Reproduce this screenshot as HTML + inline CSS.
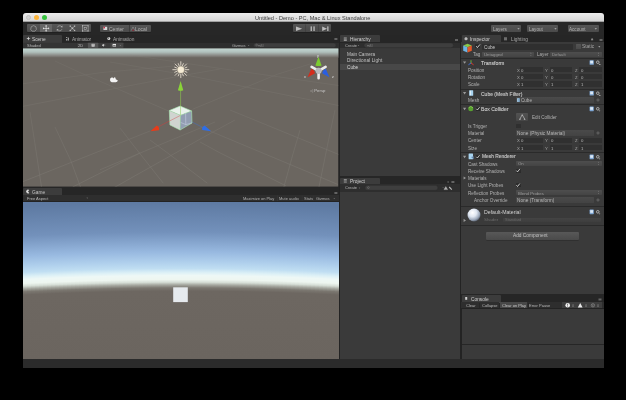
<!DOCTYPE html>
<html><head><meta charset="utf-8">
<style>
*{margin:0;padding:0;box-sizing:border-box}
html,body{width:626px;height:400px;background:#000;overflow:hidden;font-family:"Liberation Sans",sans-serif;color:#c4c4c4}
.a{position:absolute}
.t{position:absolute;white-space:nowrap;font-size:4.6px;line-height:6px;color:#bdbdbd;padding-top:1px;will-change:transform}
.btn{position:absolute;background:linear-gradient(#565656,#4a4a4a);border-radius:1px;box-shadow:0 0.5px 0 #1a1a1a}
.tab{position:absolute;background:#3c3c3c;border-radius:1px 1px 0 0}
.fld{position:absolute;background:#2f2f2f;border-radius:1px}
.dd{position:absolute;background:linear-gradient(#555,#4a4a4a);border-radius:1px}
svg{position:absolute;overflow:visible}
</style></head><body>
<!-- window -->
<div class="a" style="left:23px;top:13px;width:581px;height:355px;background:#232323;border-radius:3px 3px 0 0;overflow:hidden">
  <div class="a" style="left:0;top:0;width:581px;height:9px;background:linear-gradient(#ededed,#d6d6d6);border-bottom:0.5px solid #a0a0a0"></div>
</div>
<!-- traffic lights -->
<div class="a" style="left:25.5px;top:15px;width:5.4px;height:5.4px;border-radius:50%;background:#d2d2d2;border:0.4px solid #c2c2c2"></div>
<div class="a" style="left:33.9px;top:15px;width:5.4px;height:5.4px;border-radius:50%;background:#fbb43a"></div>
<div class="a" style="left:41.9px;top:15px;width:5.4px;height:5.4px;border-radius:50%;background:#36c23e"></div>
<div class="t" style="left:255px;top:14.1px;font-size:5.6px;line-height:6px;color:#3c3c3c">Untitled - Demo - PC, Mac &amp; Linux Standalone</div>

<!-- toolbar -->
<div class="a" style="left:23px;top:22px;width:581px;height:13px;background:#272727"></div>
<div class="btn" style="left:27.1px;top:24.4px;width:63.8px;height:7.8px"></div>
<div class="a" style="left:40.2px;top:24.4px;width:12.3px;height:7.8px;background:#666"></div>
<div class="btn" style="left:99.8px;top:25px;width:51.3px;height:6.8px"></div>
<div class="a" style="left:129px;top:25px;width:0.5px;height:6.8px;background:#3c3c3c"></div>
<div class="btn" style="left:293px;top:24.2px;width:37.9px;height:7.9px;background:linear-gradient(#545454,#484848)"></div>
<div class="dd" style="left:490.8px;top:25.3px;width:30.7px;height:6.6px"></div>
<div class="dd" style="left:527.4px;top:25.3px;width:31.1px;height:6.6px"></div>
<div class="dd" style="left:567.6px;top:25.3px;width:31.2px;height:6.6px"></div>
<!-- toolbar icons -->
<svg class="a" style="left:0;top:0" width="626" height="60" viewBox="0 0 626 60">
<g fill="none" stroke="#bcbcbc" stroke-width="0.55">
<path d="M33.6 25.6 L36 26.8 L36.4 29.4 L34.8 31.2 L32.2 31.2 L30.7 29.4 L31.2 26.8Z"/>
<path d="M61.6 26.6 A2.5 2.5 0 0 0 57.3 27.4 M57.6 30 A2.5 2.5 0 0 0 61.9 29.2"/>
<path d="M70.2 26.1 L74.6 30.5 M74.6 26.1 L70.2 30.5"/>
<rect x="82.5" y="25.8" width="5.6" height="5.2"/>
<rect x="84.1" y="27.4" width="2.4" height="2"/>
</g>
<g fill="#eeeeee">
<rect x="43.6" y="28.05" width="5" height="0.6"/><rect x="45.8" y="25.9" width="0.6" height="4.9"/>
<path d="M46.1 25 L47.2 26.2 H45Z M46.1 31.7 L47.2 30.5 H45Z M42.8 28.35 L44 27.25 V29.45Z M49.4 28.35 L48.2 27.25 V29.45Z"/>
</g>
<g fill="#bcbcbc">
<path d="M62.4 25.6 L62.4 27.6 L60.5 27.1Z M56.8 31 L56.8 29 L58.7 29.5Z"/>
<rect x="71.6" y="27.5" width="1.6" height="1.6"/>
<rect x="69.6" y="25.5" width="1.3" height="1.3"/><rect x="73.9" y="25.5" width="1.3" height="1.3"/><rect x="69.6" y="29.8" width="1.3" height="1.3"/><rect x="73.9" y="29.8" width="1.3" height="1.3"/>
<rect x="82" y="25.3" width="1" height="1"/><rect x="87.6" y="25.3" width="1" height="1"/><rect x="82" y="30.5" width="1" height="1"/><rect x="87.6" y="30.5" width="1" height="1"/>
<path d="M296 26.4 L302.2 28.7 L296 31Z"/>
<rect x="310.6" y="26.4" width="1.3" height="4.6"/><rect x="313.4" y="26.4" width="1.3" height="4.6"/>
<path d="M322.2 26.4 L327 28.7 L322.2 31Z"/><rect x="327.2" y="26.4" width="1.3" height="4.6"/>
</g>
<rect x="103.4" y="26.8" width="3.8" height="3.2" fill="#d8d8d8"/>
<rect x="103.4" y="26.8" width="1.6" height="1.6" fill="#c03048"/>
<path d="M131 30.8 L133 27 L135 30.8" fill="none" stroke="#a0a0a0" stroke-width="0.5"/>
<path d="M132.2 30.8 L133.2 29 L134.2 30.8Z" fill="#a02838"/>
<g fill="#b8b8b8"><path d="M517.3 28.2 h2.4 l-1.2 1.3z M554.3 28.2 h2.4 l-1.2 1.3z M594.6 28.2 h2.4 l-1.2 1.3z"/></g>
<rect x="305.4" y="24.4" width="0.5" height="7.6" fill="#3a3a3a"/>
<rect x="318.4" y="24.4" width="0.5" height="7.6" fill="#3a3a3a"/>
</svg>
<div class="t" style="left:108.8px;top:24.9px;font-size:5px;color:#b4b4b4">Center</div>
<div class="t" style="left:135.3px;top:24.9px;font-size:5px;color:#b4b4b4">Local</div>
<div class="t" style="left:492.5px;top:26.2px;font-size:4.6px;color:#b4b4b4">Layers</div>
<div class="t" style="left:529.2px;top:26.2px;font-size:4.6px;color:#b4b4b4">Layout</div>
<div class="t" style="left:569.4px;top:26.2px;font-size:4.6px;color:#b4b4b4">Account</div>

<!-- scene -->
<div class="a" style="left:23px;top:35px;width:315.8px;height:7.5px;background:#262626"></div>
<div class="tab" style="left:23.2px;top:35px;width:39px;height:7.5px"></div>
<div class="a" style="left:23px;top:42.5px;width:315.8px;height:5.8px;background:#2e2e2e"></div>
<svg class="a" style="left:0;top:0;overflow:hidden;clip-path:inset(48.3px 287.5px 213.2px 23px)" width="626" height="400" viewBox="0 0 626 400">
<defs>
<linearGradient id="gm" gradientUnits="userSpaceOnUse" x1="0" y1="48" x2="0" y2="187"><stop offset="0" stop-color="#fff" stop-opacity="0.25"/><stop offset="0.4" stop-color="#fff" stop-opacity="0.38"/><stop offset="1" stop-color="#fff" stop-opacity="0.55"/></linearGradient><mask id="gmask" maskUnits="userSpaceOnUse" x="0" y="0" width="626" height="400"><rect x="0" y="0" width="626" height="400" fill="url(#gm)"/></mask>
<linearGradient id="ssky" x1="0" y1="0" x2="0" y2="1"><stop offset="0" stop-color="#c4d8d4"/><stop offset="0.4" stop-color="#b0c0bc"/><stop offset="0.75" stop-color="#8a8a86"/><stop offset="1" stop-color="#6b6660"/></linearGradient>
</defs>
<rect x="23" y="48.3" width="315.5" height="138.5" fill="#6b6660"/>
<rect x="23" y="48.3" width="315.8" height="9.5" fill="url(#ssky)"/>
<g stroke="#8a8680" stroke-width="0.6" fill="none" mask="url(#gmask)">
<path d="M22 83.9 L102 72.5 L180 65.5"/>
<path d="M22 106.5 L102 91 L180 76 L220 69"/>
<path d="M22 182 L150 131"/>
<path d="M192.5 109.3 L277.5 74.2 L310 64"/>
<path d="M100 169.75 L180.5 136.2 L215 122"/>
<path d="M113.4 188 L203.5 137.2 L235 120"/>
<path d="M72.7 187 L140 153"/>
<path d="M283.9 187 L292.7 155 L300 130"/>
<path d="M319 187 L330 133 L335 110"/>
<path d="M55 61 L79.8 72.5 L172 112.5"/>
<path d="M210 131 L338 184.5"/>
<path d="M110 62 L182 74.25 L340 105.8"/>
<path d="M130 55 L220 68.4 L340 85.7"/>
<path d="M30 112 L34.7 142.2 L41.5 187"/>
<path d="M55 127 L70.8 160.7 L80.5 187"/>
<path d="M120 128 L134.5 146.75 L163.25 183.2"/>
<path d="M150 140 L167 152.5 L207.3 183.2"/>
<path d="M200 142 L220 152.9 L286 185.9"/>
<path d="M230 110 L248.6 117.6 L340 155"/>
</g>
<!-- camera icon -->
<path d="M110 80.3 Q109.6 78.2 111.6 77.6 Q113 77.3 113.8 78.4 L114.6 77 Q115.6 77.4 115.8 79.3 L117.9 80.6 Q117.3 82.3 115.5 82.2 L111.8 82.2 Q110.3 82 110 80.3Z" fill="#f4f4f4"/>
<!-- sun -->
<path d="M185.20 69.70L188.80 69.70M184.87 71.38L186.90 72.23M183.91 72.81L186.46 75.36M182.48 73.77L183.33 75.80M180.80 74.10L180.80 77.70M179.12 73.77L178.27 75.80M177.69 72.81L175.14 75.36M176.73 71.38L174.70 72.23M176.40 69.70L172.80 69.70M176.73 68.02L174.70 67.17M177.69 66.59L175.14 64.04M179.12 65.63L178.27 63.60M180.80 65.30L180.80 61.70M182.48 65.63L183.33 63.60M183.91 66.59L186.46 64.04M184.87 68.02L186.90 67.17" stroke="#ece4d4" stroke-width="0.85" stroke-linecap="round"/>
<circle cx="180.8" cy="69.7" r="3.4" fill="#f6ecd6" stroke="#c8bca0" stroke-width="0.45"/>
<!-- green y arrow -->
<line x1="180.6" y1="89" x2="180.6" y2="110" stroke="#8cc850" stroke-width="0.6"/>
<path d="M180.6 81 L183.3 90.3 Q180.6 91.3 177.9 90.3Z" fill="#8ad438"/>
<!-- red line & arrow -->
<line x1="180.5" y1="115.3" x2="155" y2="128.5" stroke="#c84040" stroke-width="0.55"/>
<path d="M150.4 131.2 L156.8 125.6 Q159.8 127.4 159 130.2Z" fill="#e63c1a"/>
<!-- blue line & arrow -->
<line x1="184" y1="118" x2="204" y2="128" stroke="#4870b8" stroke-width="0.55"/>
<path d="M211.2 131.2 L204.6 125.4 Q201.4 127.2 202.2 130Z" fill="#2e6ee8"/>
<!-- cube -->
<path d="M180.1 106.1 L191.6 110.9 L180.5 115.3 L169.3 110.5Z" fill="#eaf2ec"/>
<path d="M169.3 110.5 L180.5 115.3 L180.1 130 L169.9 124.9Z" fill="#d0d4d0"/>
<path d="M180.5 115.3 L191.6 110.9 L192 123 L180.1 130Z" fill="#929eb2"/>
<path d="M185.6 112.6 L185.8 124.6 M180.6 122.4 L185.8 124.6 L192 123" fill="none" stroke="#d4dcec" stroke-width="0.45"/>
<path d="M180.1 106.1 L191.6 110.9 L192 123 L180.1 130 L169.9 124.9 L169.3 110.5Z M169.3 110.5 L180.5 115.3 L191.6 110.9 M180.5 115.3 L180.1 130" fill="none" stroke="#a8e8b0" stroke-width="0.6"/>
<line x1="180.6" y1="106" x2="180.5" y2="115.3" stroke="#8cc850" stroke-width="0.5"/>
<line x1="180" y1="115.6" x2="169.6" y2="121" stroke="#d05050" stroke-width="0.45"/>
<!-- orientation gizmo -->
<g>
<path d="M318.6 70.8 L311.6 66.8 M318.6 70.8 L325.6 66.8 M318.6 70.8 L318.6 78.3" stroke="#ececec" stroke-width="2.6" stroke-linecap="round"/>
<path d="M318.5 56.8 L321.6 65.4 Q318.5 66.6 315.4 65.4Z" fill="#7ccc30"/>
<path d="M307.6 77.2 L311.4 68.8 Q315.2 70.6 314.8 73.6Z" fill="#d42c1c"/>
<path d="M329.4 77.2 L325.8 68.8 Q322 70.6 322.4 73.6Z" fill="#2a5ee0"/>
<circle cx="318.6" cy="70.8" r="3.1" fill="#b8b8bc"/>
</g>
</svg>
<div class="t" style="left:317px;top:52.2px;font-size:3.6px;color:#e0e0e0">y</div>
<div class="t" style="left:304px;top:73.3px;font-size:3.6px;color:#e0e0e0">x</div>
<div class="t" style="left:331.6px;top:73.3px;font-size:3.6px;color:#e0e0e0">z</div>
<div class="t" style="left:309.5px;top:87.2px;font-size:4.3px;color:#c8c8c8">&#9665; Persp</div>

<!-- game -->
<div class="a" style="left:23px;top:186.8px;width:315.8px;height:8.4px;background:#262626"></div>
<div class="tab" style="left:23px;top:187.8px;width:39.4px;height:7.4px"></div>
<div class="a" style="left:23px;top:195.2px;width:315.8px;height:6.3px;background:#2e2e2e"></div>
<svg class="a" style="left:23px;top:201.5px;overflow:hidden" width="315.8" height="157.3" viewBox="0 0 315.8 157.3">
<defs><linearGradient id="sky" gradientUnits="userSpaceOnUse" x1="0" y1="0" x2="0" y2="157.3"><stop offset="0.0000" stop-color="#5e7aa2"/><stop offset="0.1907" stop-color="#7391bb"/><stop offset="0.3179" stop-color="#98b9e0"/><stop offset="0.3814" stop-color="#afcfec"/><stop offset="0.4228" stop-color="#c0def2"/><stop offset="0.4482" stop-color="#dcf0f6"/><stop offset="0.4673" stop-color="#eef8f6"/><stop offset="0.4927" stop-color="#eef6f0"/><stop offset="0.5099" stop-color="#d6ded6"/><stop offset="0.5264" stop-color="#a6a8a0"/><stop offset="0.5455" stop-color="#7b7770"/><stop offset="0.5658" stop-color="#6d6761"/><stop offset="1.0000" stop-color="#6b655f"/></linearGradient>
<filter id="bl0"><feGaussianBlur stdDeviation="0.35"/></filter>
</defs>
<g shape-rendering="crispEdges"><rect x="0" y="-10" width="5" height="180" fill="url(#sky)" transform="translate(0 3.90)"/><rect x="4" y="-10" width="5" height="180" fill="url(#sky)" transform="translate(0 3.70)"/><rect x="8" y="-10" width="5" height="180" fill="url(#sky)" transform="translate(0 3.51)"/><rect x="12" y="-10" width="5" height="180" fill="url(#sky)" transform="translate(0 3.32)"/><rect x="16" y="-10" width="5" height="180" fill="url(#sky)" transform="translate(0 3.14)"/><rect x="20" y="-10" width="5" height="180" fill="url(#sky)" transform="translate(0 2.96)"/><rect x="24" y="-10" width="5" height="180" fill="url(#sky)" transform="translate(0 2.79)"/><rect x="28" y="-10" width="5" height="180" fill="url(#sky)" transform="translate(0 2.62)"/><rect x="32" y="-10" width="5" height="180" fill="url(#sky)" transform="translate(0 2.46)"/><rect x="36" y="-10" width="5" height="180" fill="url(#sky)" transform="translate(0 2.31)"/><rect x="40" y="-10" width="5" height="180" fill="url(#sky)" transform="translate(0 2.16)"/><rect x="44" y="-10" width="5" height="180" fill="url(#sky)" transform="translate(0 2.01)"/><rect x="48" y="-10" width="5" height="180" fill="url(#sky)" transform="translate(0 1.87)"/><rect x="52" y="-10" width="5" height="180" fill="url(#sky)" transform="translate(0 1.73)"/><rect x="56" y="-10" width="5" height="180" fill="url(#sky)" transform="translate(0 1.60)"/><rect x="60" y="-10" width="5" height="180" fill="url(#sky)" transform="translate(0 1.48)"/><rect x="64" y="-10" width="5" height="180" fill="url(#sky)" transform="translate(0 1.35)"/><rect x="68" y="-10" width="5" height="180" fill="url(#sky)" transform="translate(0 1.24)"/><rect x="72" y="-10" width="5" height="180" fill="url(#sky)" transform="translate(0 1.13)"/><rect x="76" y="-10" width="5" height="180" fill="url(#sky)" transform="translate(0 1.02)"/><rect x="80" y="-10" width="5" height="180" fill="url(#sky)" transform="translate(0 0.92)"/><rect x="84" y="-10" width="5" height="180" fill="url(#sky)" transform="translate(0 0.83)"/><rect x="88" y="-10" width="5" height="180" fill="url(#sky)" transform="translate(0 0.74)"/><rect x="92" y="-10" width="5" height="180" fill="url(#sky)" transform="translate(0 0.66)"/><rect x="96" y="-10" width="5" height="180" fill="url(#sky)" transform="translate(0 0.58)"/><rect x="100" y="-10" width="5" height="180" fill="url(#sky)" transform="translate(0 0.50)"/><rect x="104" y="-10" width="5" height="180" fill="url(#sky)" transform="translate(0 0.43)"/><rect x="108" y="-10" width="5" height="180" fill="url(#sky)" transform="translate(0 0.37)"/><rect x="112" y="-10" width="5" height="180" fill="url(#sky)" transform="translate(0 0.31)"/><rect x="116" y="-10" width="5" height="180" fill="url(#sky)" transform="translate(0 0.26)"/><rect x="120" y="-10" width="5" height="180" fill="url(#sky)" transform="translate(0 0.21)"/><rect x="124" y="-10" width="5" height="180" fill="url(#sky)" transform="translate(0 0.16)"/><rect x="128" y="-10" width="5" height="180" fill="url(#sky)" transform="translate(0 0.12)"/><rect x="132" y="-10" width="5" height="180" fill="url(#sky)" transform="translate(0 0.09)"/><rect x="136" y="-10" width="5" height="180" fill="url(#sky)" transform="translate(0 0.06)"/><rect x="140" y="-10" width="5" height="180" fill="url(#sky)" transform="translate(0 0.04)"/><rect x="144" y="-10" width="5" height="180" fill="url(#sky)" transform="translate(0 0.02)"/><rect x="148" y="-10" width="5" height="180" fill="url(#sky)" transform="translate(0 0.01)"/><rect x="152" y="-10" width="5" height="180" fill="url(#sky)" transform="translate(0 0.00)"/><rect x="156" y="-10" width="5" height="180" fill="url(#sky)" transform="translate(0 0.00)"/><rect x="160" y="-10" width="5" height="180" fill="url(#sky)" transform="translate(0 0.00)"/><rect x="164" y="-10" width="5" height="180" fill="url(#sky)" transform="translate(0 0.01)"/><rect x="168" y="-10" width="5" height="180" fill="url(#sky)" transform="translate(0 0.02)"/><rect x="172" y="-10" width="5" height="180" fill="url(#sky)" transform="translate(0 0.04)"/><rect x="176" y="-10" width="5" height="180" fill="url(#sky)" transform="translate(0 0.06)"/><rect x="180" y="-10" width="5" height="180" fill="url(#sky)" transform="translate(0 0.09)"/><rect x="184" y="-10" width="5" height="180" fill="url(#sky)" transform="translate(0 0.13)"/><rect x="188" y="-10" width="5" height="180" fill="url(#sky)" transform="translate(0 0.17)"/><rect x="192" y="-10" width="5" height="180" fill="url(#sky)" transform="translate(0 0.21)"/><rect x="196" y="-10" width="5" height="180" fill="url(#sky)" transform="translate(0 0.26)"/><rect x="200" y="-10" width="5" height="180" fill="url(#sky)" transform="translate(0 0.31)"/><rect x="204" y="-10" width="5" height="180" fill="url(#sky)" transform="translate(0 0.37)"/><rect x="208" y="-10" width="5" height="180" fill="url(#sky)" transform="translate(0 0.44)"/><rect x="212" y="-10" width="5" height="180" fill="url(#sky)" transform="translate(0 0.50)"/><rect x="216" y="-10" width="5" height="180" fill="url(#sky)" transform="translate(0 0.58)"/><rect x="220" y="-10" width="5" height="180" fill="url(#sky)" transform="translate(0 0.66)"/><rect x="224" y="-10" width="5" height="180" fill="url(#sky)" transform="translate(0 0.74)"/><rect x="228" y="-10" width="5" height="180" fill="url(#sky)" transform="translate(0 0.83)"/><rect x="232" y="-10" width="5" height="180" fill="url(#sky)" transform="translate(0 0.93)"/><rect x="236" y="-10" width="5" height="180" fill="url(#sky)" transform="translate(0 1.03)"/><rect x="240" y="-10" width="5" height="180" fill="url(#sky)" transform="translate(0 1.13)"/><rect x="244" y="-10" width="5" height="180" fill="url(#sky)" transform="translate(0 1.25)"/><rect x="248" y="-10" width="5" height="180" fill="url(#sky)" transform="translate(0 1.36)"/><rect x="252" y="-10" width="5" height="180" fill="url(#sky)" transform="translate(0 1.48)"/><rect x="256" y="-10" width="5" height="180" fill="url(#sky)" transform="translate(0 1.61)"/><rect x="260" y="-10" width="5" height="180" fill="url(#sky)" transform="translate(0 1.74)"/><rect x="264" y="-10" width="5" height="180" fill="url(#sky)" transform="translate(0 1.87)"/><rect x="268" y="-10" width="5" height="180" fill="url(#sky)" transform="translate(0 2.02)"/><rect x="272" y="-10" width="5" height="180" fill="url(#sky)" transform="translate(0 2.16)"/><rect x="276" y="-10" width="5" height="180" fill="url(#sky)" transform="translate(0 2.31)"/><rect x="280" y="-10" width="5" height="180" fill="url(#sky)" transform="translate(0 2.47)"/><rect x="284" y="-10" width="5" height="180" fill="url(#sky)" transform="translate(0 2.63)"/><rect x="288" y="-10" width="5" height="180" fill="url(#sky)" transform="translate(0 2.80)"/><rect x="292" y="-10" width="5" height="180" fill="url(#sky)" transform="translate(0 2.97)"/><rect x="296" y="-10" width="5" height="180" fill="url(#sky)" transform="translate(0 3.15)"/><rect x="300" y="-10" width="5" height="180" fill="url(#sky)" transform="translate(0 3.33)"/><rect x="304" y="-10" width="5" height="180" fill="url(#sky)" transform="translate(0 3.52)"/><rect x="308" y="-10" width="5" height="180" fill="url(#sky)" transform="translate(0 3.71)"/><rect x="312" y="-10" width="5" height="180" fill="url(#sky)" transform="translate(0 3.91)"/></g>
<rect x="150.2" y="85.3" width="14.6" height="14.8" fill="#e6eaee" filter="url(#bl0)"/>
</svg>

<!-- hierarchy -->
<div class="a" style="left:339.5px;top:35px;width:120.5px;height:7.5px;background:#262626"></div>
<div class="tab" style="left:340.2px;top:35.2px;width:39.4px;height:7.3px"></div>
<div class="a" style="left:339.5px;top:42.5px;width:120.5px;height:5.5px;background:#2e2e2e"></div>
<div class="a" style="left:339.5px;top:48px;width:120.5px;height:127.8px;background:#3a3a3a"></div>
<div class="a" style="left:339.5px;top:64.2px;width:120.5px;height:5.6px;background:#484848"></div>
<div class="t" style="left:346.8px;top:63.5px;font-size:4.7px;color:#d8d8d8">Cube</div>

<!-- project -->
<div class="a" style="left:339.5px;top:175.8px;width:120.5px;height:8.5px;background:#262626"></div>
<div class="tab" style="left:340px;top:177.5px;width:39.7px;height:6.8px"></div>
<div class="a" style="left:339.5px;top:184.3px;width:120.5px;height:7.3px;background:#2e2e2e"></div>
<div class="a" style="left:340.4px;top:191.6px;width:119.6px;height:167px;background:#3a3a3a"></div>

<!-- inspector -->
<div class="a" style="left:461px;top:35px;width:143px;height:7.4px;background:#262626"></div>
<div class="tab" style="left:461.9px;top:35.4px;width:38.9px;height:7px"></div>
<div class="a" style="left:461px;top:42.4px;width:143px;height:251.3px;background:#3a3a3a"></div>

<!-- inspector content -->
<div class="a" style="left:516.1px;top:168.6px;width:4.5px;height:4.2px;background:#2c2c2c;border-radius:0.5px"></div>
<div class="a" style="left:516.1px;top:183.1px;width:4.5px;height:4.2px;background:#2c2c2c;border-radius:0.5px"></div>
<div class="a" style="left:461px;top:57.6px;width:143.0px;height:0.7px;background:#2a2a2a;"></div>
<div class="a" style="left:461px;top:88.8px;width:143.0px;height:0.7px;background:#2a2a2a;"></div>
<div class="a" style="left:461px;top:103.9px;width:143.0px;height:0.7px;background:#2a2a2a;"></div>
<div class="a" style="left:461px;top:152px;width:143.0px;height:0.7px;background:#2a2a2a;"></div>
<div class="a" style="left:461px;top:205.9px;width:143.0px;height:0.7px;background:#2a2a2a;"></div>
<div class="a" style="left:461px;top:224.8px;width:143.0px;height:0.7px;background:#2a2a2a;"></div>
<div class="a" style="left:482.4px;top:43.8px;width:90.4px;height:5.8px;background:#2f2f2f;border-radius:0.8px"></div>
<div class="t" style="left:483.8px;top:43.7px;font-size:4.7px;color:#c8c8c8;">Cube</div>
<div class="a" style="left:475.3px;top:44px;width:5.0px;height:4.4px;background:#2a2a2a;border-radius:0.6px"></div>
<div class="a" style="left:576.4px;top:44.2px;width:4.8px;height:4.4px;background:linear-gradient(#555,#4a4a4a);border-radius:0.5px"></div>
<div class="t" style="left:582px;top:43.2px;font-size:4.9px;color:#a4a4a4;">Static</div>
<div class="t" style="left:473.4px;top:51.4px;font-size:4.6px;color:#b0b0b0;">Tag</div>
<div class="a" style="left:482.4px;top:51.8px;width:51.7px;height:5.1px;background:linear-gradient(#4e4e4e,#444);border-radius:0.8px"></div>
<div class="t" style="left:484.3px;top:51.3px;font-size:4.3px;color:#9c9c9c;">Untagged</div>
<div class="t" style="left:537px;top:51.4px;font-size:4.6px;color:#b0b0b0;">Layer</div>
<div class="a" style="left:550.2px;top:51.8px;width:51.4px;height:5.1px;background:linear-gradient(#4e4e4e,#444);border-radius:0.8px"></div>
<div class="t" style="left:551.8px;top:51.3px;font-size:4.3px;color:#9c9c9c;">Default</div>
<div class="t" style="left:481.1px;top:58.9px;font-size:5.2px;color:#d0d0d0;-webkit-text-stroke:0.12px #c8c8c8">Transform</div>
<div class="t" style="left:467.9px;top:66.5px;font-size:4.6px;color:#b0b0b0;">Position</div>
<div class="t" style="left:516.8px;top:66.5px;font-size:4.2px;color:#a8a8a8;">X</div>
<div class="a" style="left:520px;top:66.8px;width:22.9px;height:5.4px;background:#303030;border-radius:0.6px"></div>
<div class="t" style="left:521.3px;top:66.5px;font-size:4.3px;color:#b8b8b8;">0</div>
<div class="t" style="left:545.3px;top:66.5px;font-size:4.2px;color:#a8a8a8;">Y</div>
<div class="a" style="left:549.8px;top:66.8px;width:22.4px;height:5.4px;background:#303030;border-radius:0.6px"></div>
<div class="t" style="left:551.0999999999999px;top:66.5px;font-size:4.3px;color:#b8b8b8;">0</div>
<div class="t" style="left:574.7px;top:66.5px;font-size:4.2px;color:#a8a8a8;">Z</div>
<div class="a" style="left:579.2px;top:66.8px;width:22.4px;height:5.4px;background:#303030;border-radius:0.6px"></div>
<div class="t" style="left:580.5px;top:66.5px;font-size:4.3px;color:#b8b8b8;">0</div>
<div class="t" style="left:467.9px;top:73.6px;font-size:4.6px;color:#b0b0b0;">Rotation</div>
<div class="t" style="left:516.8px;top:73.6px;font-size:4.2px;color:#a8a8a8;">X</div>
<div class="a" style="left:520px;top:73.89999999999999px;width:22.9px;height:5.4px;background:#303030;border-radius:0.6px"></div>
<div class="t" style="left:521.3px;top:73.6px;font-size:4.3px;color:#b8b8b8;">0</div>
<div class="t" style="left:545.3px;top:73.6px;font-size:4.2px;color:#a8a8a8;">Y</div>
<div class="a" style="left:549.8px;top:73.89999999999999px;width:22.4px;height:5.4px;background:#303030;border-radius:0.6px"></div>
<div class="t" style="left:551.0999999999999px;top:73.6px;font-size:4.3px;color:#b8b8b8;">0</div>
<div class="t" style="left:574.7px;top:73.6px;font-size:4.2px;color:#a8a8a8;">Z</div>
<div class="a" style="left:579.2px;top:73.89999999999999px;width:22.4px;height:5.4px;background:#303030;border-radius:0.6px"></div>
<div class="t" style="left:580.5px;top:73.6px;font-size:4.3px;color:#b8b8b8;">0</div>
<div class="t" style="left:467.9px;top:81.0px;font-size:4.6px;color:#b0b0b0;">Scale</div>
<div class="t" style="left:516.8px;top:81.0px;font-size:4.2px;color:#a8a8a8;">X</div>
<div class="a" style="left:520px;top:81.3px;width:22.9px;height:5.4px;background:#303030;border-radius:0.6px"></div>
<div class="t" style="left:521.3px;top:81.0px;font-size:4.3px;color:#b8b8b8;">1</div>
<div class="t" style="left:545.3px;top:81.0px;font-size:4.2px;color:#a8a8a8;">Y</div>
<div class="a" style="left:549.8px;top:81.3px;width:22.4px;height:5.4px;background:#303030;border-radius:0.6px"></div>
<div class="t" style="left:551.0999999999999px;top:81.0px;font-size:4.3px;color:#b8b8b8;">1</div>
<div class="t" style="left:574.7px;top:81.0px;font-size:4.2px;color:#a8a8a8;">Z</div>
<div class="a" style="left:579.2px;top:81.3px;width:22.4px;height:5.4px;background:#303030;border-radius:0.6px"></div>
<div class="t" style="left:580.5px;top:81.0px;font-size:4.3px;color:#b8b8b8;">1</div>
<div class="t" style="left:481.4px;top:89.6px;font-size:5px;color:#c8c8c8;-webkit-text-stroke:0.12px #c8c8c8">Cube (Mesh Filter)</div>
<div class="t" style="left:467.9px;top:96.9px;font-size:4.6px;color:#b0b0b0;">Mesh</div>
<div class="a" style="left:516.1px;top:97.3px;width:78.0px;height:5.3px;background:linear-gradient(#4a4a4a,#434343);border-radius:0.6px"></div>
<div class="a" style="left:517px;top:97.8px;width:3.4px;height:4.2px;background:linear-gradient(90deg,#a8c8e0,#6890b0);border-radius:0.4px"></div>
<div class="t" style="left:521.2px;top:96.9px;font-size:4.6px;color:#b8b8b8;">Cube</div>
<div class="t" style="left:481.4px;top:105.2px;font-size:5.1px;color:#c8c8c8;-webkit-text-stroke:0.12px #c8c8c8">Box Collider</div>
<div class="a" style="left:475.6px;top:106.7px;width:4.3px;height:4.2px;background:#2a2a2a;border-radius:0.5px"></div>
<div class="a" style="left:516.1px;top:112.8px;width:12.4px;height:8.2px;background:linear-gradient(#525252,#464646);border-radius:0.8px"></div>
<div class="t" style="left:531.7px;top:114.2px;font-size:4.6px;color:#b0b0b0;">Edit Collider</div>
<div class="t" style="left:467.9px;top:122.6px;font-size:4.6px;color:#b0b0b0;">Is Trigger</div>
<div class="a" style="left:516.1px;top:123.6px;width:4.5px;height:4.0px;background:#2f2f2f;border-radius:0.5px"></div>
<div class="t" style="left:467.9px;top:129.9px;font-size:4.6px;color:#b0b0b0;">Material</div>
<div class="a" style="left:516.1px;top:130.4px;width:78.0px;height:5.3px;background:linear-gradient(#4a4a4a,#434343);border-radius:0.6px"></div>
<div class="t" style="left:516.8px;top:129.9px;font-size:4.75px;color:#b8b8b8;">None (Physic Material)</div>
<div class="t" style="left:467.9px;top:137.4px;font-size:4.6px;color:#b0b0b0;">Center</div>
<div class="t" style="left:516.8px;top:137.4px;font-size:4.2px;color:#a8a8a8;">X</div>
<div class="a" style="left:520px;top:137.70000000000002px;width:22.9px;height:5.4px;background:#303030;border-radius:0.6px"></div>
<div class="t" style="left:521.3px;top:137.4px;font-size:4.3px;color:#b8b8b8;">0</div>
<div class="t" style="left:545.3px;top:137.4px;font-size:4.2px;color:#a8a8a8;">Y</div>
<div class="a" style="left:549.8px;top:137.70000000000002px;width:22.4px;height:5.4px;background:#303030;border-radius:0.6px"></div>
<div class="t" style="left:551.0999999999999px;top:137.4px;font-size:4.3px;color:#b8b8b8;">0</div>
<div class="t" style="left:574.7px;top:137.4px;font-size:4.2px;color:#a8a8a8;">Z</div>
<div class="a" style="left:579.2px;top:137.70000000000002px;width:22.4px;height:5.4px;background:#303030;border-radius:0.6px"></div>
<div class="t" style="left:580.5px;top:137.4px;font-size:4.3px;color:#b8b8b8;">0</div>
<div class="t" style="left:467.9px;top:144.5px;font-size:4.6px;color:#b0b0b0;">Size</div>
<div class="t" style="left:516.8px;top:144.5px;font-size:4.2px;color:#a8a8a8;">X</div>
<div class="a" style="left:520px;top:144.8px;width:22.9px;height:5.4px;background:#303030;border-radius:0.6px"></div>
<div class="t" style="left:521.3px;top:144.5px;font-size:4.3px;color:#b8b8b8;">1</div>
<div class="t" style="left:545.3px;top:144.5px;font-size:4.2px;color:#a8a8a8;">Y</div>
<div class="a" style="left:549.8px;top:144.8px;width:22.4px;height:5.4px;background:#303030;border-radius:0.6px"></div>
<div class="t" style="left:551.0999999999999px;top:144.5px;font-size:4.3px;color:#b8b8b8;">1</div>
<div class="t" style="left:574.7px;top:144.5px;font-size:4.2px;color:#a8a8a8;">Z</div>
<div class="a" style="left:579.2px;top:144.8px;width:22.4px;height:5.4px;background:#303030;border-radius:0.6px"></div>
<div class="t" style="left:580.5px;top:144.5px;font-size:4.3px;color:#b8b8b8;">1</div>
<div class="t" style="left:481.6px;top:153.2px;font-size:4.9px;color:#c8c8c8;-webkit-text-stroke:0.12px #c8c8c8">Mesh Renderer</div>
<div class="a" style="left:475.6px;top:154.6px;width:4.3px;height:4.2px;background:#2a2a2a;border-radius:0.5px"></div>
<div class="t" style="left:468px;top:160.5px;font-size:4.6px;color:#b0b0b0;">Cast Shadows</div>
<div class="a" style="left:515.6px;top:161px;width:86.0px;height:5.0px;background:linear-gradient(#4e4e4e,#444);border-radius:0.8px"></div>
<div class="t" style="left:517.6px;top:160.4px;font-size:4.3px;color:#9c9c9c;">On</div>
<div class="t" style="left:468px;top:167.7px;font-size:4.6px;color:#b0b0b0;">Receive Shadows</div>
<div class="t" style="left:467.6px;top:175.0px;font-size:4.6px;color:#b0b0b0;">Materials</div>
<div class="t" style="left:468px;top:182.2px;font-size:4.6px;color:#b0b0b0;">Use Light Probes</div>
<div class="t" style="left:468px;top:189.6px;font-size:4.6px;color:#b0b0b0;">Reflection Probes</div>
<div class="a" style="left:515.6px;top:190px;width:86.0px;height:5.0px;background:linear-gradient(#4e4e4e,#444);border-radius:0.8px"></div>
<div class="t" style="left:517.6px;top:189.5px;font-size:4.3px;color:#9c9c9c;">Blend Probes</div>
<div class="t" style="left:474px;top:197.0px;font-size:4.6px;color:#b0b0b0;">Anchor Override</div>
<div class="a" style="left:515.6px;top:197.4px;width:78.5px;height:5.2px;background:linear-gradient(#4a4a4a,#434343);border-radius:0.6px"></div>
<div class="t" style="left:516.6px;top:197.0px;font-size:4.75px;color:#b8b8b8;">None (Transform)</div>
<div class="t" style="left:484px;top:208.1px;font-size:5.2px;color:#d0d0d0">Default-Material</div>
<div class="t" style="left:484px;top:215.8px;font-size:4.4px;color:#6c6c6c;">Shader</div>
<div class="a" style="left:503px;top:217.6px;width:98.0px;height:4.2px;background:linear-gradient(#444,#3e3e3e);border-radius:0.8px"></div>
<div class="t" style="left:505px;top:215.8px;font-size:4px;color:#6a6a6a;">Standard</div>
<div class="a" style="left:486px;top:231.7px;width:92.8px;height:7.9px;background:linear-gradient(#585858,#4a4a4a);border-radius:1px;box-shadow:0 0.5px 0 #262626"></div>
<div class="t" style="left:512.8px;top:232.1px;font-size:4.8px;color:#c0c0c0;">Add Component</div>
<svg class="a" style="left:0;top:0" width="626" height="400" viewBox="0 0 626 400">
<!-- cube icon -->
<path d="M467.5 43.8 L471.8 45.6 L467.5 47.3 L463.2 45.6Z" fill="#88c848"/>
<path d="M463.2 45.6 L467.5 47.3 L467.5 52.5 L463.2 50.7Z" fill="#6cb4e4"/>
<path d="M467.5 47.3 L471.8 45.6 L471.8 50.7 L467.5 52.5Z" fill="#e45828"/>
<path d="M476.2 46.2 l1.2 1.4 l2.6-3.2" stroke="#f0f0f0" stroke-width="0.8" fill="none"/>

<path d="M598.3 46.3 h2 l-1 1.1z" fill="#c0c0c0"/>
<g fill="#909090"><path d="M530.3 53.4 l0.6-0.8 0.6 0.8z M530.3 55 l0.6 0.8 0.6-0.8z M597.8 53.4 l0.6-0.8 0.6 0.8z M597.8 55 l0.6 0.8 0.6-0.8z M597.8 162.6 l0.6-0.8 0.6 0.8z M597.8 164.2 l0.6 0.8 0.6-0.8z M597.8 191.6 l0.6-0.8 0.6 0.8z M597.8 193.2 l0.6 0.8 0.6-0.8z"/></g>
<!-- fold arrows -->
<g fill="#9a9a9a">
<path d="M463 61.4 h3.2 l-1.6 2.4z M463 92.1 h3.2 l-1.6 2.4z M463 107.8 h3.2 l-1.6 2.4z M463 155.8 h3.2 l-1.6 2.4z"/>
<path d="M463.6 176.4 v3.2 l2.4-1.6z M463.6 218.8 v3.2 l2.4-1.6z"/>
</g>
<!-- transform icon -->
<path d="M471 60.2 v2.8" stroke="#70c040" stroke-width="0.9"/>
<path d="M471 63 l-2.6 1.8" stroke="#3c70d8" stroke-width="1"/>
<path d="M471 63 l2.6 1.8" stroke="#d83c30" stroke-width="1"/>
<!-- right icons (book + gear) -->
<g>
<rect x="589.6" y="60.2" width="4.2" height="4.6" rx="0.6" fill="#7ea6d4"/><rect x="590.2" y="60.8" width="2.8" height="2.6" fill="#dbe8f4"/>
<rect x="589.6" y="91" width="4.2" height="4.6" rx="0.6" fill="#7ea6d4"/><rect x="590.2" y="91.6" width="2.8" height="2.6" fill="#dbe8f4"/>
<rect x="589.6" y="106.6" width="4.2" height="4.6" rx="0.6" fill="#7ea6d4"/><rect x="590.2" y="107.2" width="2.8" height="2.6" fill="#dbe8f4"/>
<rect x="589.6" y="154.6" width="4.2" height="4.6" rx="0.6" fill="#7ea6d4"/><rect x="590.2" y="155.2" width="2.8" height="2.6" fill="#dbe8f4"/>
<rect x="589.6" y="209.6" width="4.2" height="4.6" rx="0.6" fill="#7ea6d4"/><rect x="590.2" y="210.2" width="2.8" height="2.6" fill="#dbe8f4"/>
</g>
<g fill="none" stroke="#b8b8b8" stroke-width="0.9">
<circle cx="597.8" cy="62.2" r="1.3"/><circle cx="597.8" cy="93.2" r="1.3"/><circle cx="597.8" cy="108.8" r="1.3"/><circle cx="597.8" cy="156.8" r="1.3"/><circle cx="597.8" cy="211.8" r="1.3"/>
</g>
<g fill="#b8b8b8"><path d="M599.2 63.6 l1.4 1.4 M599.2 94.6 l1.4 1.4" stroke="#b8b8b8" stroke-width="0.6"/>
<path d="M598.6 64 h1.8 l-0.9 1z M598.6 95 h1.8 l-0.9 1z M598.6 110.6 h1.8 l-0.9 1z M598.6 158.6 h1.8 l-0.9 1z M598.6 213.6 h1.8 l-0.9 1z"/></g>
<!-- object pickers -->
<g fill="none" stroke="#8a8a8a" stroke-width="0.5"><circle cx="598" cy="100" r="1.1"/><circle cx="598" cy="133" r="1.1"/><circle cx="598" cy="200" r="1.1"/></g>
<!-- mesh filter icon -->
<rect x="469.2" y="90.2" width="4" height="5.6" rx="0.5" fill="#a8d4f0"/><rect x="469.8" y="90.8" width="1.2" height="4.4" fill="#e0f0fa"/>
<!-- box collider icon -->
<circle cx="470.8" cy="108.7" r="2.5" fill="#58a030"/><path d="M468.6 107.8 L470.8 106.4 L473 107.8" stroke="#9ad860" stroke-width="0.7" fill="none"/>
<path d="M476.4 108.8 l1 1.2 l2.2-2.8" stroke="#f0f0f0" stroke-width="0.75" fill="none"/>
<!-- edit collider icon -->
<path d="M519.8 119.2 L522.2 114.8 L524.8 119.2 M519.8 119.2 l1-0.2 M524.8 119.2 h-1" stroke="#d0d0d0" stroke-width="0.6" fill="none"/>
<circle cx="522.2" cy="115" r="0.5" fill="#d0d0d0"/><circle cx="519.8" cy="119.2" r="0.5" fill="#d0d0d0"/><circle cx="524.8" cy="119.2" r="0.5" fill="#d0d0d0"/>
<!-- mesh renderer icon -->
<rect x="468.6" y="153.4" width="4.4" height="5.8" rx="0.5" fill="#a8d4f0"/><path d="M471 157 l2.6 2.2 v-3z" fill="#6a8ab0"/>
<path d="M476.4 156.8 l1 1.2 l2.2-2.8" stroke="#f0f0f0" stroke-width="0.75" fill="none"/>
<!-- checks -->
<g stroke="#e8e8e8" stroke-width="0.8" fill="none">
<path d="M516.4 170.6 l1.1 1.3 l2.4-3"/>
<path d="M516.4 185.2 l1.1 1.3 l2.4-3"/>
</g>
<!-- sphere -->
<defs><radialGradient id="sph" cx="0.38" cy="0.32" r="0.7"><stop offset="0" stop-color="#ffffff"/><stop offset="0.45" stop-color="#dfe6f0"/><stop offset="0.8" stop-color="#9aa6b8"/><stop offset="1" stop-color="#5a6270"/></radialGradient></defs>
<circle cx="474" cy="215" r="6.5" fill="url(#sph)"/>
</svg>
<!-- console -->
<div class="a" style="left:461px;top:293.7px;width:143px;height:8.6px;background:#262626"></div>
<div class="tab" style="left:462.4px;top:295.4px;width:38.4px;height:6.9px"></div>
<div class="a" style="left:461px;top:302.3px;width:143px;height:6.2px;background:#2e2e2e"></div>
<div class="a" style="left:462px;top:308.5px;width:142px;height:50.1px;background:#3a3a3a"></div>

<!-- panel chrome text -->
<svg class="a" style="left:0;top:0" width="626" height="400" viewBox="0 0 626 400">
<!-- scene tab icon -->
<path d="M28.4 36.4 L29 38 L30.6 38.5 L29 39 L28.4 40.6 L27.8 39 L26.2 38.5 L27.8 38Z" fill="#d0d0d0"/>
<g fill="#b8b8b8"><rect x="66.2" y="37" width="1" height="1"/><rect x="66.2" y="39" width="1" height="1.6"/><rect x="67.8" y="37.6" width="1" height="3"/></g>
<circle cx="108.8" cy="38.5" r="1.5" fill="#d8d8d8"/><circle cx="108.4" cy="38.1" r="0.6" fill="#333"/>
<!-- scene toolbar -->
<path d="M70.8 44.8 h1.6 l-0.8 0.9z" fill="#b0b0b0"/>
<rect x="76.8" y="42.8" width="47" height="5" fill="#3a3a3a" rx="0.5"/><rect x="87.9" y="42.8" width="10.4" height="5" fill="#555" rx="0.5"/><rect x="23" y="42.8" width="53.5" height="5" fill="#343434"/>
<rect x="91.6" y="43.8" width="3" height="2.8" fill="#e0e0e0"/><path d="M92.1 44.2h2M92.1 45.2h2" stroke="#555" stroke-width="0.4"/>
<path d="M102.2 44.5h0.8l1-0.8v3l-1-0.8h-0.8z" fill="#c8c8c8"/><path d="M104.6 44.2q0.6 0.9 0 1.8" stroke="#c8c8c8" stroke-width="0.35" fill="none"/>
<rect x="110.4" y="42.8" width="12.7" height="5" fill="#474747" rx="0.5"/>
<rect x="112.6" y="43.9" width="3.4" height="2.6" fill="#e8e8e8"/><path d="M113 46.1l1-1 0.8 0.7 0.8-0.5v0.8h-2.6z" fill="#222"/>
<path d="M119.6 44.9 h1.4 l-0.7 0.8z" fill="#a0a0a0"/>
<rect x="253.5" y="43" width="82.5" height="4.4" rx="2.2" fill="#3e3e3e" stroke="#2a2a2a" stroke-width="0.4"/>
<circle cx="256.6" cy="45" r="0.9" fill="none" stroke="#909090" stroke-width="0.35"/>
<path d="M248 44.9 h1.4 l-0.7 0.8z" fill="#a0a0a0"/>
<!-- menu icons -->
<g fill="#a0a0a0">
<path d="M334.4 38.6h3v0.5h-3zM334.4 39.5h3v0.5h-3z"/>
<path d="M455 39h3v0.5h-3zM455 39.9h3v0.5h-3z"/>
<path d="M599.5 39h3v0.5h-3zM599.5 39.9h3v0.5h-3z"/>
<path d="M451.4 181.2h3v0.5h-3zM451.4 182.1h3v0.5h-3z"/>
<path d="M334.4 192.2h3v0.5h-3zM334.4 193.1h3v0.5h-3z"/>
<path d="M598.5 298.8h3v0.5h-3zM598.5 299.7h3v0.5h-3z"/>
</g>
<!-- game tab icon -->
<path d="M29.3 190.1 A1.9 1.9 0 1 0 29.3 192.9 L28 191.5Z" fill="#d8d8d8"/>
<path d="M86.5 197.8 h1.4 l-0.7 0.8z" fill="#a0a0a0"/>
<path d="M333.5 198 h1.4 l-0.7 0.8z" fill="#a0a0a0"/>
<g fill="#3a3a3a"><rect x="277" y="195.5" width="0.5" height="5.6"/><rect x="301.8" y="195.5" width="0.5" height="5.6"/><rect x="312.8" y="195.5" width="0.5" height="5.6"/></g>
<!-- hierarchy tab icon -->
<g fill="#c0c0c0"><rect x="343.8" y="37.6" width="3" height="0.7"/><rect x="343.8" y="38.8" width="3" height="0.7"/><rect x="343.8" y="40" width="3" height="0.7"/></g>
<path d="M357.8 44.9 h1.4 l-0.7 0.8z" fill="#a0a0a0"/>
<rect x="364" y="42.9" width="89.4" height="4.8" rx="2.4" fill="#3e3e3e" stroke="#2a2a2a" stroke-width="0.4"/>
<!-- project -->
<g fill="#c0c0c0"><rect x="343.8" y="179.4" width="3" height="0.6"/><rect x="343.8" y="180.6" width="3" height="0.6"/><rect x="343.8" y="181.8" width="3" height="0.6"/></g>
<path d="M358.8 187.7 h1.4 l-0.7 0.8z" fill="#a0a0a0"/>
<rect x="365" y="185.3" width="72.8" height="5" rx="2.5" fill="#3e3e3e" stroke="#2a2a2a" stroke-width="0.4"/>
<circle cx="368.4" cy="187.6" r="0.9" fill="none" stroke="#909090" stroke-width="0.35"/>
<path d="M444 189.6 l1.8-3 1.8 3z M442.8 187.2 l1 1" fill="#b0b0b0" stroke="#b0b0b0" stroke-width="0.4"/>
<path d="M449.6 186.6 l2.6 2.6 l-0.8 0.8 l-2.6-2.6z" fill="#b8b8b8"/>
<path d="M447.6 181.6 h1 v1 h-1z" fill="#a0a0a0"/>
<!-- inspector tab icons -->
<circle cx="466" cy="38.8" r="1.5" fill="#d8d8d8"/><rect x="465.7" y="38.4" width="0.6" height="1.3" fill="#333"/>
<g fill="#b0b0b0"><rect x="504" y="37.6" width="3" height="0.6"/><rect x="504" y="38.6" width="3" height="0.6"/><rect x="504" y="39.6" width="3" height="0.6"/></g>
<path d="M591.6 38.3 h1 v1.8 h-1z M591 39.5 h2.2 v0.8 h-2.2z" fill="#a0a0a0"/>
<!-- console tab icon -->
<rect x="465.2" y="297" width="2" height="2.8" fill="#d0d0d0"/>
</svg>
<div class="t" style="left:31.6px;top:35.6px;font-size:4.8px;color:#d2d2d2">Scene</div>
<div class="t" style="left:71.9px;top:35.6px;font-size:4.8px;color:#a8a8a8">Animator</div>
<div class="t" style="left:112.7px;top:35.6px;font-size:4.8px;color:#a8a8a8">Animation</div>
<div class="t" style="left:27px;top:41.6px;font-size:4px;color:#b8b8b8">Shaded</div>
<div class="t" style="left:78.3px;top:41.6px;font-size:4px;color:#b8b8b8">2D</div>
<div class="t" style="left:231.5px;top:41.6px;font-size:4px;color:#b0b0b0">Gizmos</div>
<div class="t" style="left:258.4px;top:41.6px;font-size:3.6px;color:#707070">&#9662;All</div>
<div class="t" style="left:32px;top:188.6px;font-size:4.8px;color:#c4c4c4">Game</div>
<div class="t" style="left:27px;top:194.8px;font-size:4px;color:#b8b8b8">Free Aspect</div>
<div class="t" style="left:243.2px;top:194.9px;font-size:4px;color:#b0b0b0">Maximize on Play</div>
<div class="t" style="left:278.9px;top:194.9px;font-size:4px;color:#b0b0b0">Mute audio</div>
<div class="t" style="left:303.8px;top:194.9px;font-size:4px;color:#b0b0b0">Stats</div>
<div class="t" style="left:316.1px;top:194.9px;font-size:4px;color:#b0b0b0">Gizmos</div>
<div class="t" style="left:349.7px;top:36px;font-size:4.8px;color:#d2d2d2">Hierarchy</div>
<div class="t" style="left:344.8px;top:41.9px;font-size:4px;color:#b8b8b8">Create</div>
<div class="t" style="left:366.5px;top:41.9px;font-size:3.6px;color:#707070">&#9662;All</div>
<div class="t" style="left:346.8px;top:50.5px;font-size:4.7px;color:#c4c4c4">Main Camera</div>
<div class="t" style="left:346.8px;top:57.1px;font-size:4.7px;color:#c4c4c4;letter-spacing:0.1px">Directional Light</div>
<div class="t" style="left:350px;top:177.6px;font-size:4.8px;color:#d2d2d2">Project</div>
<div class="t" style="left:344.8px;top:184.4px;font-size:4px;color:#b8b8b8">Create</div>
<div class="t" style="left:470px;top:36px;font-size:4.8px;color:#d2d2d2">Inspector</div>
<div class="t" style="left:510.5px;top:36px;font-size:4.8px;color:#a8a8a8">Lighting</div>
<div class="t" style="left:470.5px;top:296px;font-size:4.8px;color:#d2d2d2">Console</div>
<!-- console toolbar -->
<div class="a" style="left:499px;top:302.4px;width:28.1px;height:6px;background:#484848"></div>
<div class="a" style="left:562px;top:302.4px;width:39.6px;height:6px;background:#3e3e3e"></div>
<div class="a" style="left:479.2px;top:302.6px;width:0.5px;height:5.6px;background:#262626"></div>
<div class="a" style="left:498.6px;top:302.6px;width:0.5px;height:5.6px;background:#262626"></div>
<div class="a" style="left:527.6px;top:302.6px;width:0.5px;height:5.6px;background:#262626"></div>
<div class="t" style="left:465.8px;top:301.9px;font-size:4px;color:#b8b8b8">Clear</div>
<div class="t" style="left:481.7px;top:301.9px;font-size:4px;color:#b8b8b8">Collapse</div>
<div class="t" style="left:501.5px;top:301.9px;font-size:4px;color:#c8c8c8">Clear on Play</div>
<div class="t" style="left:529px;top:301.9px;font-size:4px;color:#b8b8b8">Error Pause</div>
<svg class="a" style="left:0;top:0" width="626" height="400" viewBox="0 0 626 400">
<circle cx="567.7" cy="305.3" r="2.3" fill="#f0f0f0"/><rect x="567.4" y="303.8" width="0.6" height="1.8" fill="#333"/><rect x="567.4" y="306.1" width="0.6" height="0.6" fill="#333"/>
<path d="M580.2 302.9 L582.6 307.4 H577.8Z" fill="#e8e8e8"/>
<circle cx="592.9" cy="305.3" r="1.7" fill="none" stroke="#a0a0a0" stroke-width="0.5"/><rect x="592.6" y="304.4" width="0.6" height="2" fill="#a0a0a0"/>
</svg>
<div class="t" style="left:572px;top:301.9px;font-size:3.8px;color:#8a8a8a">0</div>
<div class="t" style="left:584.8px;top:301.9px;font-size:3.8px;color:#8a8a8a">0</div>
<div class="t" style="left:597.3px;top:301.9px;font-size:3.8px;color:#8a8a8a">0</div>
<div class="a" style="left:462px;top:344px;width:142px;height:0.7px;background:#262626"></div>
<!-- status -->
<div class="a" style="left:23px;top:358.7px;width:581px;height:9.1px;background:#2b2b2b"></div>
</body></html>
